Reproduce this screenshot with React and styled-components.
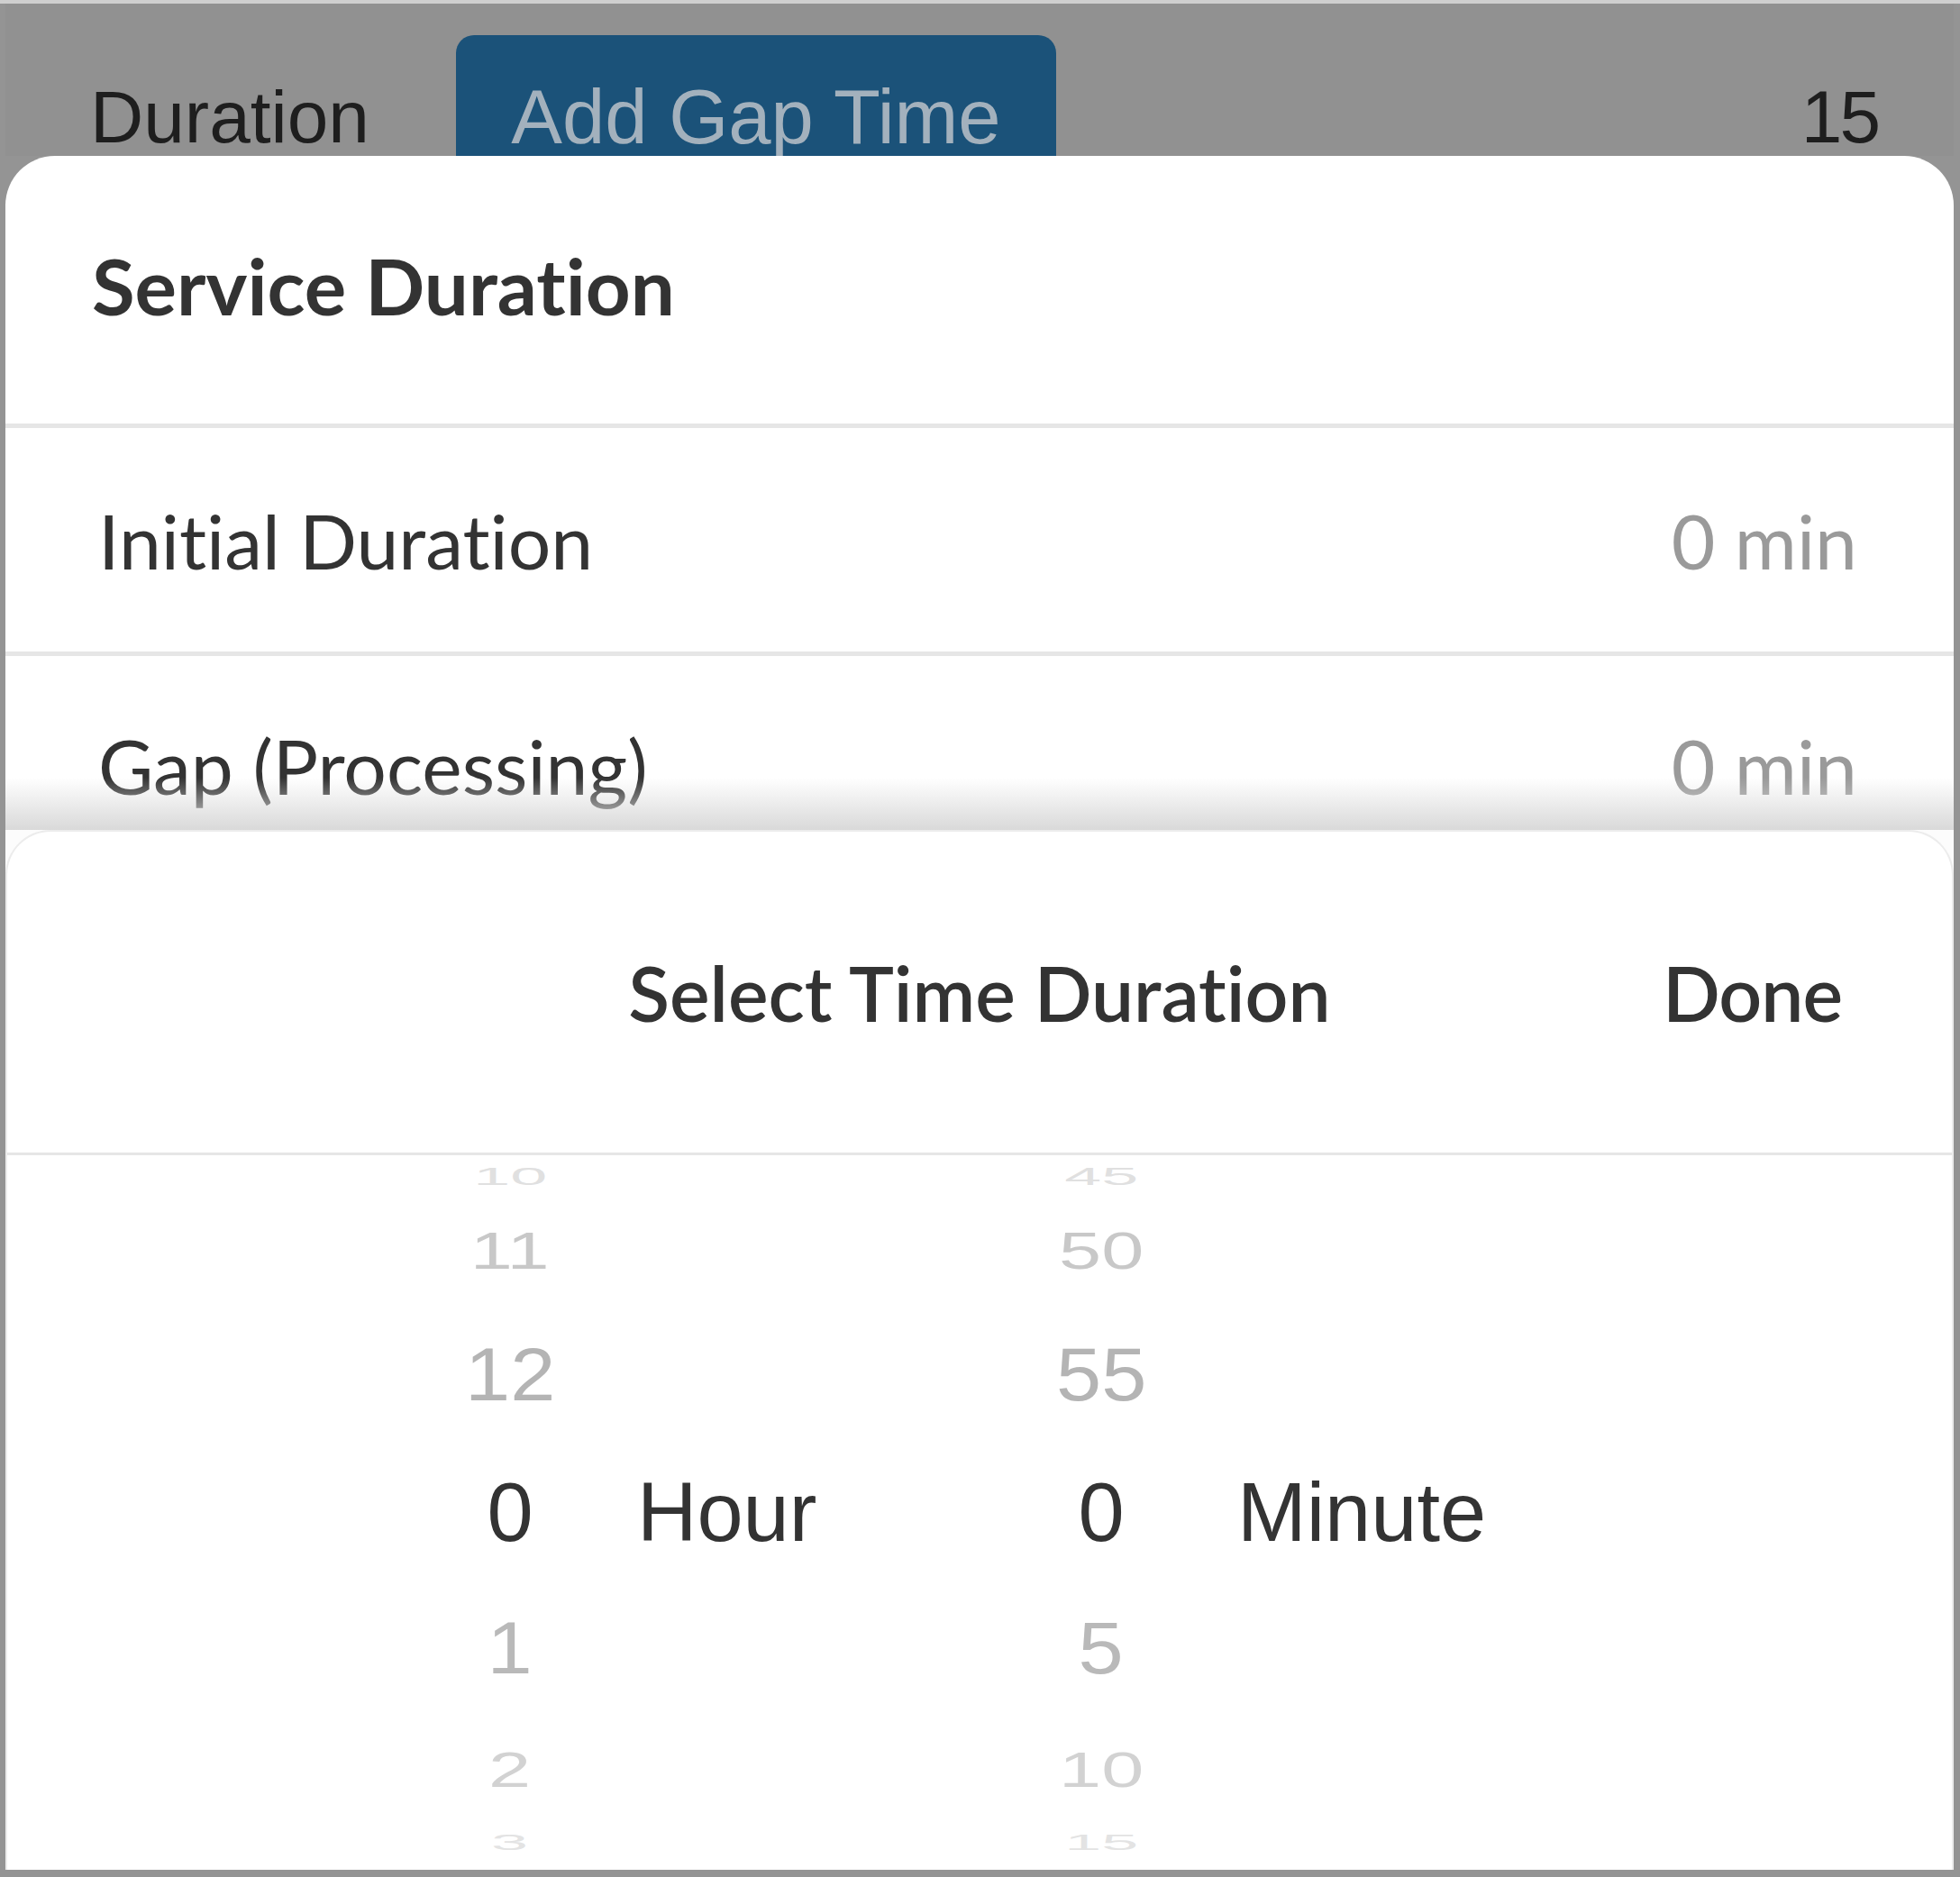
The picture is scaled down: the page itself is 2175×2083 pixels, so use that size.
import React from "react";
import styled, { createGlobalStyle } from "styled-components";

const GlobalStyle = createGlobalStyle`
  html, body {
    margin: 0;
    padding: 0;
    background: #9a9a9a;
  }
  * {
    box-sizing: border-box;
  }
`;

const Frame = styled.div`
  width: 2175px;
  height: 2083px;
  padding: 0 7px 8px 6px;
  border-top: 4px solid #cfcfcf;
  background: #949494;
  display: flex;
  flex-direction: column;
  overflow: hidden;
`;

// the dimmed page behind the sheets
const TopBar = styled.div`
  height: 169px;
  flex-shrink: 0;
  background: #919191;
  display: flex;
  align-items: flex-start;
  padding: 0 84px 0 94px;
  font-family: "Liberation Sans", Arial, sans-serif;
  font-size: 82px;
  color: #1e1e1e;
`;

const BarLabel = styled.div`
  margin-top: 85px;
  line-height: 1;
`;

const GapButton = styled.div`
  margin: 35px 0 0 96px;
  width: 666px;
  height: 134px;
  border-radius: 20px 20px 0 0;
  background: #1b5279;
  color: #a3b1bd;
  font-size: 85px;
  text-align: center;
  padding-top: 48px;
  line-height: 1;
`;

const BarValue = styled.div`
  margin: 85px 0 0 auto;
  line-height: 1;
  letter-spacing: -3px;
`;

const Sheet = styled.div`
  position: relative;
  height: 748px;
  flex-shrink: 0;
  background: #fff;
  border-radius: 55px 55px 0 0;
  overflow: hidden;
  font-family: Lato, "Open Sans", sans-serif;
  font-variant-ligatures: none;
  color: #333;

  &::after {
    content: "";
    position: absolute;
    left: 0;
    right: 0;
    bottom: 0;
    height: 58px;
    background: linear-gradient(to bottom, rgba(255,255,255,0), #d9d9d9);
  }
`;

const SheetTitle = styled.div`
  height: 297px;
  display: flex;
  align-items: center;
  padding: 0 98px 10px 96px;
  font-size: 87px;
  font-weight: 700;
`;

const Row = styled.div`
  height: ${p => p.$h}px;
  border-top: 5px solid #e6e6e6;
  display: flex;
  align-items: center;
  justify-content: space-between;
  padding: 0 107px 0 103px;
  font-size: 84px;
`;

const RowValue = styled.span`
  color: #9a9a9a;
`;

const Bottom = styled.div`
  flex: 1;
  background: #fcfcfc;
  display: flex;
`;

const PickerSheet = styled.div`
  flex: 1;
  display: flex;
  flex-direction: column;
  background: #fff;
  border: 2px solid #ececec;
  border-bottom: none;
  border-radius: 50px 50px 0 0;
  overflow: hidden;
`;

const PickerHeader = styled.div`
  height: 359px;
  flex-shrink: 0;
  display: grid;
  grid-template-columns: 1fr auto 1fr;
  align-items: center;
  border-bottom: 3px solid #e6e6e6;
  font-family: Lato, "Open Sans", sans-serif;
  font-variant-ligatures: none;
  font-size: 84px;
  font-weight: 600;
  color: #333;
`;

const HeaderTitle = styled.div`
  grid-column: 2;
`;

const DoneButton = styled.div`
  grid-column: 3;
  justify-self: end;
  margin-right: 122px;
  letter-spacing: -1px;
`;

const Wheels = styled.div`
  flex: 1;
  display: grid;
  grid-template-columns: 200px 456px 200px auto;
  grid-template-rows: ${p => p.$rows.map(r => `${r}px`).join(" ")};
  padding-left: 458px;
  font-family: "Liberation Sans", Arial, sans-serif;
  font-size: 92px;
  overflow: hidden;
`;

const WheelItem = styled.div`
  grid-column: ${p => p.$col};
  grid-row: ${p => p.$row};
  display: flex;
  align-items: center;
  justify-content: center;
  line-height: 1;
  color: ${p => p.$color};
  span {
    display: inline-block;
    transform: scale(${p => p.$sx}, ${p => p.$sy});
  }
`;

const Unit = styled.div`
  grid-column: ${p => p.$col};
  grid-row: ${p => p.$row};
  display: flex;
  align-items: center;
  padding-left: ${p => p.$pad}px;
  line-height: 1;
  color: #333;
`;

const ROWS = [46, 120, 154, 152, 150, 120, 40];
const SELECTED = 3;
const LOOK = [
  { color: "#e0e0e0", sx: 0.8, sy: 0.3 },
  { color: "#c8c8c8", sx: 0.92, sy: 0.62 },
  { color: "#b4b4b4", sx: 0.98, sy: 0.9 },
  { color: "#333333", sx: 1, sy: 1 },
  { color: "#b9b9b9", sx: 0.98, sy: 0.88 },
  { color: "#d2d2d2", sx: 0.92, sy: 0.6 },
  { color: "#e3e3e3", sx: 0.8, sy: 0.27 },
];

const hours = [10, 11, 12, 0, 1, 2, 3];
const minutes = [45, 50, 55, 0, 5, 10, 15];

function Wheel({ values, col }) {
  return values.map((v, i) => (
    <WheelItem
      key={`${col}_${i}`}
      $col={col}
      $row={i + 1}
      $color={LOOK[i].color}
      $sx={LOOK[i].sx}
      $sy={LOOK[i].sy}
    >
      <span>{v}</span>
    </WheelItem>
  ));
}

export default function App() {
  return (
    <>
      <GlobalStyle />
      <Frame>
        <TopBar>
          <BarLabel>Duration</BarLabel>
          <GapButton>Add Gap Time</GapButton>
          <BarValue>15</BarValue>
        </TopBar>
        <Sheet>
          <SheetTitle>Service Duration</SheetTitle>
          <Row $h={253}>
            Initial Duration
            <RowValue>0 min</RowValue>
          </Row>
          <Row $h={247}>
            Gap (Processing)
            <RowValue>0 min</RowValue>
          </Row>
        </Sheet>
        <Bottom>
          <PickerSheet>
            <PickerHeader>
              <HeaderTitle>Select Time Duration</HeaderTitle>
              <DoneButton>Done</DoneButton>
            </PickerHeader>
            <Wheels $rows={ROWS}>
              <Wheel values={hours} col={1} />
              <Unit $col={2} $row={SELECTED + 1} $pad={41}>Hour</Unit>
              <Wheel values={minutes} col={3} />
              <Unit $col={4} $row={SELECTED + 1} $pad={51}>Minute</Unit>
            </Wheels>
          </PickerSheet>
        </Bottom>
      </Frame>
    </>
  );
}
